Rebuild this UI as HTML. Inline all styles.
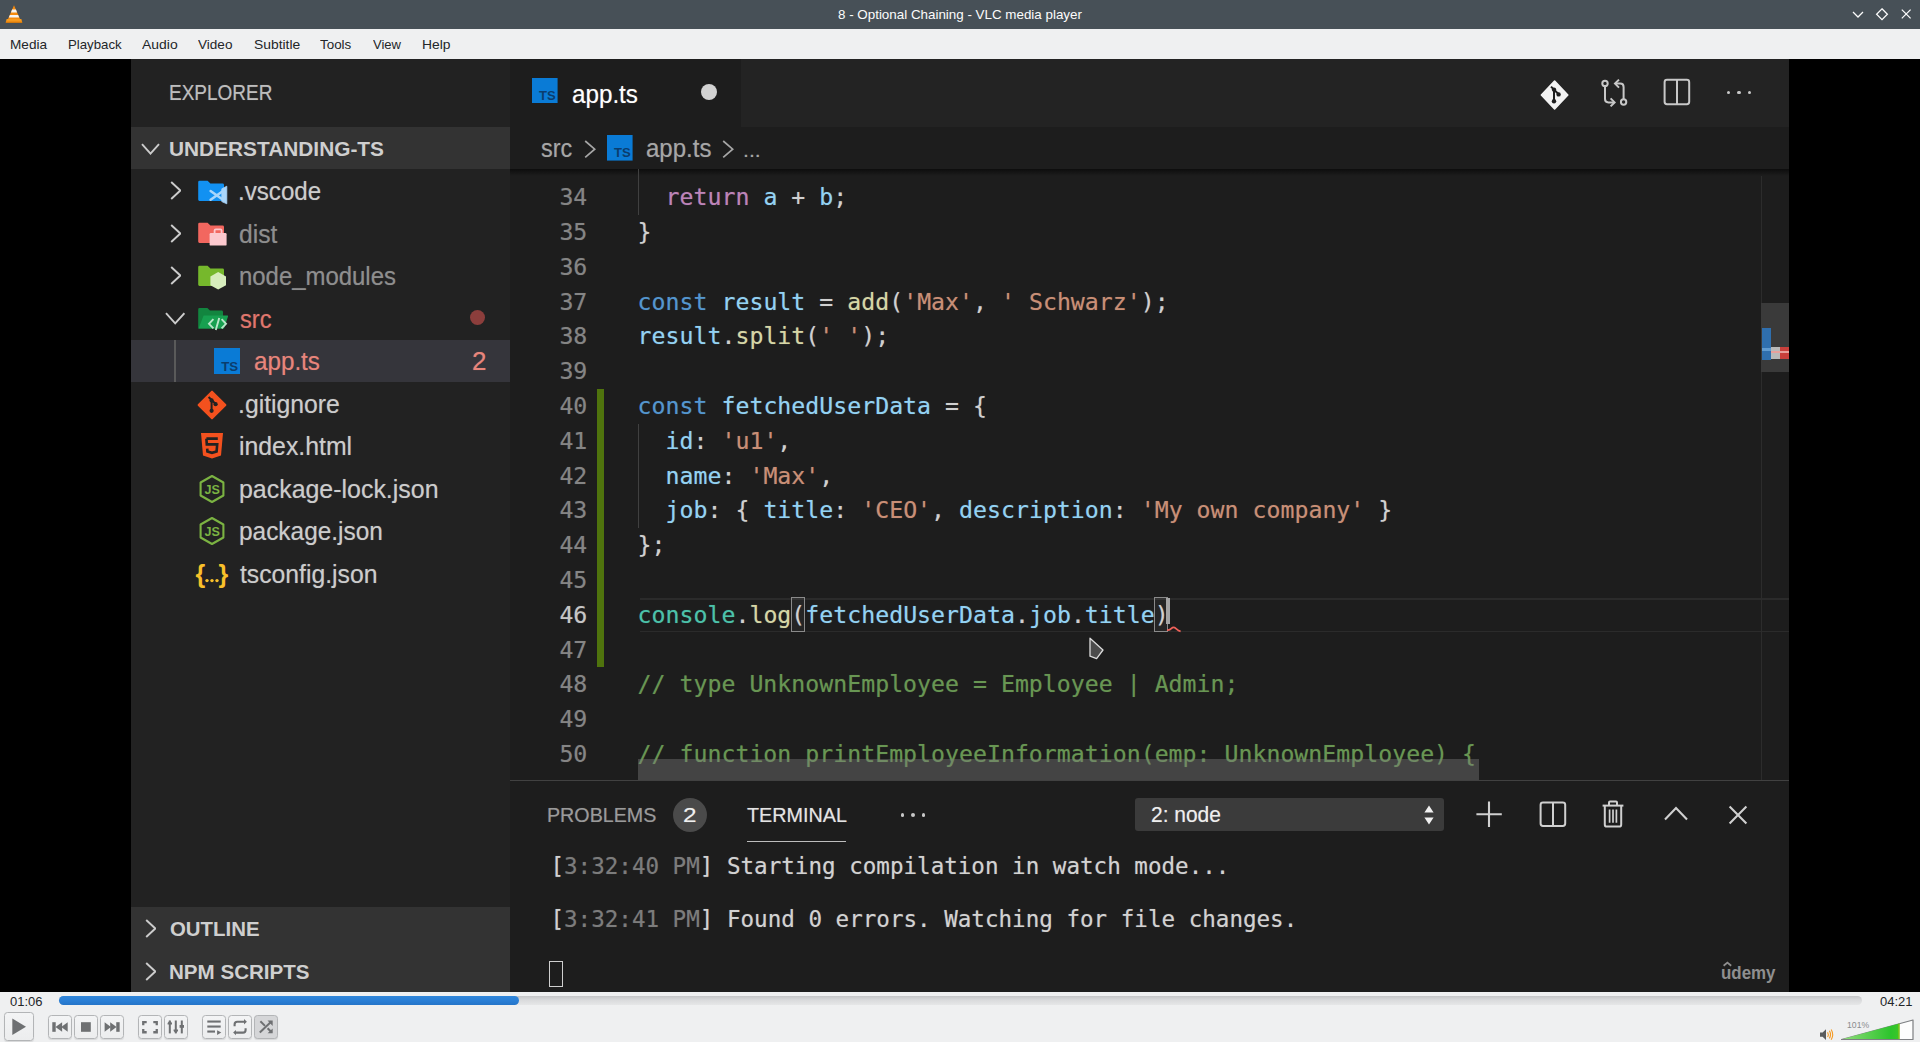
<!DOCTYPE html>
<html><head><meta charset="utf-8"><title>8 - Optional Chaining - VLC media player</title>
<style>
html,body{margin:0;padding:0;background:#000;}
body{width:1920px;height:1042px;position:relative;overflow:hidden;font-family:"Liberation Sans", sans-serif;}
body div,body span,body svg{position:absolute;display:block;white-space:pre;}
span{transform-origin:0 50%;}
.s{font-family:"Liberation Sans", sans-serif;}
.m{font-family:"DejaVu Sans Mono", "Liberation Mono", monospace;}
.s i,.m i{font-style:normal;}
.vid span{text-shadow:0 0 1px color-mix(in srgb, currentColor 45%, transparent);}
</style></head><body>
<div style="left:0px;top:0px;width:1920px;height:29px;background:#475057;"></div>
<svg style="left:5px;top:4px;" width="18" height="20" viewBox="0 0 18 20">
<path d="M9 1.2 L15.2 15.5 L2.8 15.5 Z" fill="#f58a0c"/>
<path d="M7.1 5.6 L10.9 5.6 L12.1 8.6 L5.9 8.6 Z" fill="#f4f4f4"/>
<path d="M4.9 11 L13.1 11 L14.2 13.6 L3.8 13.6 Z" fill="#f4f4f4"/>
<path d="M1.6 15 L16.4 15 L17.2 18.6 L0.8 18.6 Z" fill="#f79a1e"/>
<path d="M0.8 17.6 L17.2 17.6 L17.2 18.8 L0.8 18.8 Z" fill="#e07a05"/>
</svg>
<span id="t1" class="s" style="left:837.50px;top:7.92px;font-size:13.33px;line-height:13.33px;color:#fcfcfc;transform:scaleX(1.0039);">8 - Optional Chaining - VLC media player</span>
<svg style="left:1848px;top:4px;" width="68" height="22" viewBox="0 0 68 22">
<g fill="none" stroke="#fcfcfc" stroke-width="1.25">
<path d="M5 8 L10 13 L15 8"/>
<path d="M34 4.8 L39.4 10.2 L34 15.6 L28.6 10.2 Z"/>
<path d="M53.8 5.6 L62.6 14.4 M62.6 5.6 L53.8 14.4"/>
</g></svg>
<div style="left:0px;top:29px;width:1920px;height:30px;background:#eff0f1;"></div>
<span id="t2" class="s" style="left:9.78px;top:37.62px;font-size:13.33px;line-height:13.33px;color:#232629;transform:scaleX(1.0198);">Media</span>
<span id="t3" class="s" style="left:67.51px;top:37.62px;font-size:13.33px;line-height:13.33px;color:#232629;transform:scaleX(0.9922);">Playback</span>
<span id="t4" class="s" style="left:142.00px;top:37.62px;font-size:13.33px;line-height:13.33px;color:#232629;transform:scaleX(1.0453);">Audio</span>
<span id="t5" class="s" style="left:198.20px;top:37.62px;font-size:13.33px;line-height:13.33px;color:#232629;transform:scaleX(1.0169);">Video</span>
<span id="t6" class="s" style="left:253.50px;top:37.62px;font-size:13.33px;line-height:13.33px;color:#232629;transform:scaleX(1.0399);">Subtitle</span>
<span id="t7" class="s" style="left:320.00px;top:37.62px;font-size:13.33px;line-height:13.33px;color:#232629;transform:scaleX(1.0048);">Tools</span>
<span id="t8" class="s" style="left:372.80px;top:37.62px;font-size:13.33px;line-height:13.33px;color:#232629;transform:scaleX(0.9786);">View</span>
<span id="t9" class="s" style="left:421.96px;top:37.62px;font-size:13.33px;line-height:13.33px;color:#232629;transform:scaleX(1.0385);">Help</span>
<div style="left:0px;top:992px;width:1920px;height:50px;background:#eff0f1;"></div>
<span id="t10" class="s" style="left:10.00px;top:995.56px;font-size:12.8px;line-height:12.8px;color:#232629;transform:scaleX(1.0155);">01:06</span>
<span id="t11" class="s" style="left:1880.00px;top:995.56px;font-size:12.8px;line-height:12.8px;color:#232629;transform:scaleX(1.0155);">04:21</span>
<div style="left:59px;top:996px;width:1803px;height:9px;border-radius:4.5px;background:linear-gradient(#c4c5c7,#d9dadc 45%,#e6e7e8);"></div>
<div style="left:59px;top:996px;width:460px;height:9px;border-radius:4.5px;background:linear-gradient(#3187da,#2a7fd6 50%,#2575c9);"></div>
<div style="left:4.3px;top:1012.2px;width:27.4px;height:27.2px;border:1px solid #b3b5b7;border-radius:3.5px;background:linear-gradient(#f3f4f5,#ecedee);box-shadow:0 1px 1px rgba(0,0,0,0.10);"></div>
<div style="left:48.2px;top:1015.3px;width:21.5px;height:21.4px;border:1px solid #b3b5b7;border-radius:3.5px;background:linear-gradient(#f3f4f5,#ecedee);box-shadow:0 1px 1px rgba(0,0,0,0.10);"></div>
<div style="left:74.2px;top:1015.3px;width:21.5px;height:21.4px;border:1px solid #b3b5b7;border-radius:3.5px;background:linear-gradient(#f3f4f5,#ecedee);box-shadow:0 1px 1px rgba(0,0,0,0.10);"></div>
<div style="left:100.2px;top:1015.3px;width:21.5px;height:21.4px;border:1px solid #b3b5b7;border-radius:3.5px;background:linear-gradient(#f3f4f5,#ecedee);box-shadow:0 1px 1px rgba(0,0,0,0.10);"></div>
<div style="left:138.2px;top:1015.3px;width:21.5px;height:21.4px;border:1px solid #b3b5b7;border-radius:3.5px;background:linear-gradient(#f3f4f5,#ecedee);box-shadow:0 1px 1px rgba(0,0,0,0.10);"></div>
<div style="left:164.2px;top:1015.3px;width:21.5px;height:21.4px;border:1px solid #b3b5b7;border-radius:3.5px;background:linear-gradient(#f3f4f5,#ecedee);box-shadow:0 1px 1px rgba(0,0,0,0.10);"></div>
<div style="left:202.2px;top:1015.3px;width:21.5px;height:21.4px;border:1px solid #b3b5b7;border-radius:3.5px;background:linear-gradient(#f3f4f5,#ecedee);box-shadow:0 1px 1px rgba(0,0,0,0.10);"></div>
<div style="left:228.2px;top:1015.3px;width:21.5px;height:21.4px;border:1px solid #b3b5b7;border-radius:3.5px;background:linear-gradient(#f3f4f5,#ecedee);box-shadow:0 1px 1px rgba(0,0,0,0.10);"></div>
<div style="left:254.2px;top:1015.3px;width:21.5px;height:21.4px;border:1px solid #b3b5b7;border-radius:3.5px;background:#d5d6d8;box-shadow:0 1px 1px rgba(0,0,0,0.10);"></div>
<svg style="left:0px;top:1008px;" width="40" height="34" viewBox="0 0 40 34"><path d="M12.3 10.4 L26 18.75 L12.3 27.1 Z" fill="#6e7072"/></svg>
<svg style="left:48px;top:1015px;" width="24" height="24" viewBox="0 0 24 24"><g fill="#6e7072"><rect x="4.3" y="7.2" width="3.4" height="9.6"/><path d="M14.1 7.2 L14.1 16.8 L7.5 12 Z"/><path d="M19.7 7.2 L19.7 16.8 L13.2 12 Z"/></g></svg>
<svg style="left:74px;top:1015px;" width="24" height="24" viewBox="0 0 24 24"><rect x="7" y="7.2" width="9.8" height="9.6" fill="#6e7072"/></svg>
<svg style="left:100px;top:1015px;" width="24" height="24" viewBox="0 0 24 24"><g fill="#6e7072"><rect x="16.25" y="7.2" width="3.4" height="9.6"/><path d="M4.6 7.2 L4.6 16.8 L11 12 Z"/><path d="M10.2 7.2 L10.2 16.8 L16.5 12 Z"/></g></svg>
<svg style="left:138px;top:1015px;" width="24" height="24" viewBox="0 0 24 24"><g fill="none" stroke="#6e7072" stroke-width="2.3"><path d="M5.25 10.2 V7.05 H8.7"/><path d="M15.3 7.05 H18.75 V10.2"/><path d="M5.25 14.1 V17.25 H8.7"/><path d="M15.3 17.25 H18.75 V14.1"/></g></svg>
<svg style="left:164px;top:1015px;" width="24" height="24" viewBox="0 0 24 24"><g fill="#6e7072"><rect x="4.8" y="5.5" width="2" height="12.9"/><rect x="10.8" y="5.5" width="2" height="12.9"/><rect x="16.8" y="5.5" width="2" height="12.9"/><path d="M5.8 5.6 L8 8 V9.6 H3.6 V8 Z"/><path d="M11.8 18.2 L9.6 16 V14.6 H14 V16 Z"/><path d="M15.6 10 H20 V12.8 H15.6 Z"/></g></svg>
<svg style="left:202px;top:1015px;" width="24" height="24" viewBox="0 0 24 24"><g fill="#6e7072"><rect x="5.3" y="5.5" width="13.4" height="2.1"/><rect x="5.3" y="10.5" width="13.4" height="2.1"/><rect x="5.3" y="15.5" width="7.7" height="2.1"/><path d="M15.1 15.3 L19.3 17.6 L15.1 19.9 Z"/></g></svg>
<svg style="left:228px;top:1015px;" width="24" height="24" viewBox="0 0 24 24"><g fill="none" stroke="#6e7072" stroke-width="2.1"><path d="M6.6 11.2 V9.4 Q6.6 6.8 9.2 6.8 H16.4"/><path d="M17.6 13.2 V15 Q17.6 17.6 15 17.6 H7.6"/></g><g fill="#6e7072"><path d="M16 4.1 L18.9 6.8 L16 9.5 Z"/><path d="M8 14.9 L5.1 17.6 L8 20.3 Z"/></g></svg>
<svg style="left:254px;top:1015px;" width="24" height="24" viewBox="0 0 24 24"><g fill="none" stroke="#6e7072" stroke-width="2"><path d="M5.8 17.6 L17.4 6.6"/><path d="M6.4 6.3 L11 10.9"/><path d="M13.6 13.2 L17.6 17.2"/></g><g fill="#6e7072"><path d="M13.5 5.5 H18.7 V10.9 Z"/><path d="M18.7 13.4 V18.3 H13.6 Z"/></g></svg>
<svg style="left:1819px;top:1027px;" width="16" height="15" viewBox="0 0 16 15"><path d="M1 5.4 H3.6 L7 2.2 V13 L3.6 9.8 H1 Z" fill="#5a5c5e"/>
<g fill="none" stroke="#f59a23" stroke-width="1.1"><path d="M8.6 5.2 Q10 7.6 8.6 10"/><path d="M10.4 3.8 Q12.6 7.6 10.4 11.4"/><path d="M12.2 2.4 Q15.2 7.6 12.2 12.8"/></g></svg>
<svg style="left:1840px;top:1018px;" width="76" height="24" viewBox="0 0 76 24"><defs><linearGradient id="vg" x1="0" x2="1" y1="0" y2="0"><stop offset="0" stop-color="#8fdc7a"/><stop offset="0.85" stop-color="#2cc42c"/><stop offset="1" stop-color="#3cc628"/></linearGradient></defs>
<path d="M1.5 21.5 L73 2 L73 21.5 Z" fill="#fdfdfd" stroke="#7d7f82" stroke-width="1.2" stroke-linejoin="round"/>
<path d="M2.6 21 L59.4 5.6 L59.4 21 Z" fill="url(#vg)"/>
<rect x="58.2" y="5.8" width="1.4" height="15.2" fill="#7fc51a"/></svg>
<span id="t12" class="s" style="left:1846.50px;top:1020.72px;font-size:8.6px;line-height:8.6px;color:#8a8c8e;transform:scaleX(1.0072);">101%</span>
<div style="left:131px;top:59px;width:1658px;height:933px;overflow:hidden;background:#1d1d1d"><div style="left:-131px;top:-59px;width:1920px;height:1042px;" class="vid">
<div style="left:131px;top:59px;width:1658px;height:933px;background:#1d1d1d;"></div>
<div style="left:131px;top:59px;width:379px;height:933px;background:#222222;"></div>
<span id="t13" class="s" style="left:169.12px;top:82.80px;font-size:21.5px;line-height:21.5px;color:#bdbdbd;transform:scaleX(0.8826);">EXPLORER</span>
<div style="left:131px;top:127px;width:379px;height:42px;background:#333333;"></div>
<span id="t14" class="s" style="left:169.01px;top:138.22px;font-size:21px;line-height:21px;color:#cfcfcf;font-weight:700;text-shadow:none;transform:scaleX(0.9926);">UNDERSTANDING-TS</span>
<svg style="left:140.5px;top:143px;" width="19" height="12" viewBox="0 0 19 12"><path d="M1 1.2 L9.5 10.6 L18 1.2" fill="none" stroke="#cccccc" stroke-width="1.9"/></svg>
<div style="left:131px;top:339.6px;width:379px;height:42.55px;background:#35353b;"></div>
<div style="left:174.3px;top:339.6px;width:1.6px;height:42.55px;background:#5a5a5a;"></div>
<span id="t15" class="s" style="left:238.07px;top:179.04px;font-size:25px;line-height:25px;color:#cccccc;transform:scaleX(0.9657);">.vscode</span>
<svg style="left:169.6px;top:181.3px;" width="11.6" height="19" viewBox="0 0 11.6 19"><path d="M1.2 1 L10.299999999999999 9.5 L1.2 18" fill="none" stroke="#cccccc" stroke-width="1.9"/></svg>
<span id="t16" class="s" style="left:239.01px;top:221.59px;font-size:25px;line-height:25px;color:#8e8e8e;transform:scaleX(0.9853);">dist</span>
<svg style="left:169.6px;top:223.85px;" width="11.6" height="19" viewBox="0 0 11.6 19"><path d="M1.2 1 L10.299999999999999 9.5 L1.2 18" fill="none" stroke="#cccccc" stroke-width="1.9"/></svg>
<span id="t17" class="s" style="left:239.04px;top:264.14px;font-size:25px;line-height:25px;color:#8e8e8e;transform:scaleX(0.9568);">node_modules</span>
<svg style="left:169.6px;top:266.4px;" width="11.6" height="19" viewBox="0 0 11.6 19"><path d="M1.2 1 L10.299999999999999 9.5 L1.2 18" fill="none" stroke="#cccccc" stroke-width="1.9"/></svg>
<span id="t18" class="s" style="left:240.00px;top:306.69px;font-size:25px;line-height:25px;color:#e0766c;transform:scaleX(0.9474);">src</span>
<svg style="left:164.8px;top:312.05px;" width="20.4" height="12.8" viewBox="0 0 20.4 12.8"><path d="M1 1.2 L10.2 11.4 L19.4 1.2" fill="none" stroke="#cccccc" stroke-width="1.9"/></svg>
<span id="t19" class="s" style="left:253.73px;top:349.24px;font-size:25px;line-height:25px;color:#e8857b;transform:scaleX(0.9684);">app.ts</span>
<span id="t20" class="s" style="left:238.02px;top:391.79px;font-size:25px;line-height:25px;color:#cccccc;transform:scaleX(0.9906);">.gitignore</span>
<span id="t21" class="s" style="left:239.01px;top:434.34px;font-size:25px;line-height:25px;color:#cccccc;transform:scaleX(0.9929);">index.html</span>
<span id="t22" class="s" style="left:239.00px;top:476.89px;font-size:25px;line-height:25px;color:#cccccc;transform:scaleX(0.9969);">package-lock.json</span>
<span id="t23" class="s" style="left:239.02px;top:519.44px;font-size:25px;line-height:25px;color:#cccccc;transform:scaleX(0.9765);">package.json</span>
<span id="t24" class="s" style="left:240.00px;top:561.99px;font-size:25px;line-height:25px;color:#cccccc;transform:scaleX(0.9894);">tsconfig.json</span>
<svg style="left:198px;top:179.9px;" width="30" height="25" viewBox="0 0 30 25"><path d="M1.5 0.8 H9.6 L12.4 3.6 H24.6 Q26 3.6 26 5 V19.6 Q26 21 24.6 21 H1.5 Q0.2 21 0.2 19.6 V2.2 Q0.2 0.8 1.5 0.8 Z" fill="#1291f2"/><path d="M12.6 11 L25 19.8 M12.6 19.8 L25 11" fill="none" stroke="#a9d6fb" stroke-width="2.5" stroke-linecap="round"/><path d="M23.8 8.8 L28.8 6.2 V23.8 L23.8 21.6 Z" fill="#a9d6fb" stroke="#a9d6fb" stroke-width="0.8" stroke-linejoin="round"/></svg>
<svg style="left:198px;top:222.45px;" width="30" height="25" viewBox="0 0 30 25"><path d="M1.5 0.8 H9.6 L12.4 3.6 H24.6 Q26 3.6 26 5 V19.6 Q26 21 24.6 21 H1.5 Q0.2 21 0.2 19.6 V2.2 Q0.2 0.8 1.5 0.8 Z" fill="#f2675f"/><rect x="11.6" y="11" width="17" height="12.6" rx="1.2" fill="#fcc9ce"/><path d="M16.6 11 V8.6 Q16.6 7.4 17.8 7.4 H22.4 Q23.6 7.4 23.6 8.6 V11" fill="none" stroke="#fcc9ce" stroke-width="1.8"/></svg>
<svg style="left:198px;top:265.0px;" width="30" height="25" viewBox="0 0 30 25"><path d="M1.5 0.8 H9.6 L12.4 3.6 H24.6 Q26 3.6 26 5 V19.6 Q26 21 24.6 21 H1.5 Q0.2 21 0.2 19.6 V2.2 Q0.2 0.8 1.5 0.8 Z" fill="#76b82c"/><path d="M20.2 7 L28 11.4 V20.2 L20.2 24.6 L12.4 20.2 V11.4 Z" fill="#d7edbd"/></svg>
<svg style="left:198px;top:306.55px;" width="31" height="26" viewBox="0 0 31 26"><path d="M1.5 1 H9.4 L12 3.6 H23.6 Q25 3.6 25 5 V21.4 H0.2 V2.4 Q0.2 1 1.5 1 Z" fill="#12853f"/><path d="M5.6 8.4 H29.4 Q30.4 8.4 30 9.4 L26 21.4 H0.6 Z" fill="#17a050"/><path d="M15.4 12.2 L11 16.8 L15.4 21.4 M23.6 12.2 L28 16.8 L23.6 21.4 M21.2 11 L17.8 23" fill="none" stroke="#b9e6c9" stroke-width="1.9"/></svg>
<svg style="left:214.4px;top:347.8px;" width="26" height="26" viewBox="0 0 26 26"><rect width="26" height="26" fill="#0a7bd6"/><text x="7.2" y="22.6" font-family="Liberation Sans, sans-serif" font-weight="700" font-size="13.5" fill="#0b3d6e" textLength="17" lengthAdjust="spacingAndGlyphs">TS</text></svg>
<div style="left:469.6px;top:310.4px;width:15px;height:15px;border-radius:8px;background:#8c3e3c;"></div>
<span id="t25" class="s" style="left:472.46px;top:349.24px;font-size:25px;line-height:25px;color:#e8857b;transform:scaleX(1.0417);">2</span>
<svg style="left:197px;top:389.65px;" width="30" height="30" viewBox="0 0 30 30"><path d="M15 1.6 L28.4 15 L15 28.4 L1.6 15 Z" fill="#f4511e" stroke="#f4511e" stroke-width="2" stroke-linejoin="round"/><path d="M11.6 7 L18.4 13.8 M14.6 10.4 V20.6" stroke="#222" stroke-width="2" fill="none"/><circle cx="14.6" cy="10.4" r="2.1" fill="#222"/><circle cx="14.6" cy="20.8" r="2.1" fill="#222"/><circle cx="18.6" cy="14.2" r="2.1" fill="#222"/></svg>
<svg style="left:199px;top:431.2px;" width="26" height="30" viewBox="0 0 26 30"><path d="M2 2 H24 L22 24.6 L13 27.6 L4 24.6 Z" fill="#f4511e"/><path d="M7.4 7.6 H18.8 M7.4 7.6 L7.8 13.4 H18.2 L17.6 20.4 L13 21.8 L8.4 20.4 L8.2 17.6" fill="none" stroke="#222" stroke-width="2.6"/></svg>
<svg style="left:198px;top:473.75px;" width="28" height="30" viewBox="0 0 28 30"><path d="M14 2 L25.4 8.5 V21.5 L14 28 L2.6 21.5 V8.5 Z" fill="none" stroke="#7bb342" stroke-width="2.1" stroke-linejoin="round"/><text x="6.6" y="20.2" font-family="Liberation Sans, sans-serif" font-weight="700" font-size="13.4" fill="#7bb342" textLength="15.4" lengthAdjust="spacingAndGlyphs">JS</text></svg>
<svg style="left:198px;top:516.3px;" width="28" height="30" viewBox="0 0 28 30"><path d="M14 2 L25.4 8.5 V21.5 L14 28 L2.6 21.5 V8.5 Z" fill="none" stroke="#7bb342" stroke-width="2.1" stroke-linejoin="round"/><text x="6.6" y="20.2" font-family="Liberation Sans, sans-serif" font-weight="700" font-size="13.4" fill="#7bb342" textLength="15.4" lengthAdjust="spacingAndGlyphs">JS</text></svg>
<svg style="left:195px;top:560.35px;" width="34" height="30" viewBox="0 0 34 30"><text x="0.4" y="23.4" font-family="Liberation Sans, sans-serif" font-weight="700" font-size="25" fill="#f9c02a">{</text><text x="23.4" y="23.4" font-family="Liberation Sans, sans-serif" font-weight="700" font-size="25" fill="#f9c02a">}</text><circle cx="12" cy="20.6" r="1.7" fill="#f9c02a"/><circle cx="17" cy="20.6" r="1.7" fill="#f9c02a"/><circle cx="22" cy="20.6" r="1.7" fill="#f9c02a"/></svg>
<div style="left:131px;top:906.5px;width:379px;height:85.5px;background:#333333;"></div>
<svg style="left:144.6px;top:919px;" width="11.6" height="19" viewBox="0 0 11.6 19"><path d="M1.2 1 L10.299999999999999 9.5 L1.2 18" fill="none" stroke="#cccccc" stroke-width="1.9"/></svg>
<svg style="left:144.6px;top:961.6px;" width="11.6" height="19" viewBox="0 0 11.6 19"><path d="M1.2 1 L10.299999999999999 9.5 L1.2 18" fill="none" stroke="#cccccc" stroke-width="1.9"/></svg>
<span id="t26" class="s" style="left:170.00px;top:918.22px;font-size:21px;line-height:21px;color:#cfcfcf;font-weight:700;text-shadow:none;transform:scaleX(0.9712);">OUTLINE</span>
<span id="t27" class="s" style="left:169.02px;top:960.72px;font-size:21px;line-height:21px;color:#cfcfcf;font-weight:700;text-shadow:none;transform:scaleX(0.9796);">NPM SCRIPTS</span>
<div style="left:510px;top:59px;width:1279px;height:68px;background:#232323;"></div>
<div style="left:510px;top:59px;width:231px;height:68px;background:#1d1d1d;"></div>
<svg style="left:532px;top:77.8px;" width="25.6" height="25.6" viewBox="0 0 26 26"><rect width="26" height="26" fill="#0a7bd6"/><text x="7.2" y="22.6" font-family="Liberation Sans, sans-serif" font-weight="700" font-size="13.5" fill="#0b3d6e" textLength="17" lengthAdjust="spacingAndGlyphs">TS</text></svg>
<span id="t28" class="s" style="left:571.53px;top:82.34px;font-size:25px;line-height:25px;color:#ffffff;transform:scaleX(0.9684);">app.ts</span>
<div style="left:701px;top:84px;width:16px;height:16px;border-radius:8px;background:#d2d2d2;"></div>
<span id="t29" class="s" style="left:541.30px;top:136.14px;font-size:25px;line-height:25px;color:#a6a6a6;transform:scaleX(0.9353);">src</span>
<svg style="left:584px;top:140.2px;" width="12" height="18.4" viewBox="0 0 12 18.4"><path d="M1.2 1 L10.7 9.2 L1.2 17.4" fill="none" stroke="#a6a6a6" stroke-width="1.7"/></svg>
<svg style="left:607px;top:135.2px;" width="25.6" height="25.6" viewBox="0 0 26 26"><rect width="26" height="26" fill="#0a7bd6"/><text x="7.2" y="22.6" font-family="Liberation Sans, sans-serif" font-weight="700" font-size="13.5" fill="#0b3d6e" textLength="17" lengthAdjust="spacingAndGlyphs">TS</text></svg>
<span id="t30" class="s" style="left:646.04px;top:136.14px;font-size:25px;line-height:25px;color:#a6a6a6;transform:scaleX(0.9609);">app.ts</span>
<svg style="left:721.6px;top:140.2px;" width="12" height="18.4" viewBox="0 0 12 18.4"><path d="M1.2 1 L10.7 9.2 L1.2 17.4" fill="none" stroke="#a6a6a6" stroke-width="1.7"/></svg>
<span id="t31" class="s" style="left:742.74px;top:140.37px;font-size:20px;line-height:20px;color:#a6a6a6;transform:scaleX(1.0628);">...</span>
<div style="left:510px;top:169px;width:1279px;height:7px;background:linear-gradient(rgba(0,0,0,0.55),rgba(0,0,0,0));"></div>
<svg style="left:1539px;top:78px;" width="32" height="34" viewBox="0 0 32 34"><path d="M15.6 3 L28.8 17 L15.6 31 L2.4 17 Z" fill="#f2f2f2" stroke="#f2f2f2" stroke-width="1.6" stroke-linejoin="round"/><path d="M12 8.6 L19.4 16 M15 11.6 V23" stroke="#1d1d1d" stroke-width="2" fill="none"/><circle cx="15" cy="11.6" r="2.2" fill="#1d1d1d"/><circle cx="15" cy="23.2" r="2.2" fill="#1d1d1d"/><circle cx="19.6" cy="16.4" r="2.2" fill="#1d1d1d"/></svg>
<svg style="left:1599px;top:77px;" width="32" height="32" viewBox="0 0 32 32"><g fill="none" stroke="#c8c8c8" stroke-width="2"><circle cx="6" cy="6.4" r="2.7"/><circle cx="24.6" cy="25" r="2.7"/><path d="M6 9.2 V22 Q6 25.4 9.4 25.4 H15"/><path d="M11.6 21.4 L15.6 25.4 L11.6 29.4"/><path d="M24.6 22.2 V10 Q24.6 6.6 21.2 6.6 H16.4"/><path d="M20 2.6 L16 6.6 L20 10.6"/></g></svg>
<svg style="left:1663px;top:78px;" width="28" height="28" viewBox="0 0 28 28"><g fill="none" stroke="#c8c8c8" stroke-width="2"><rect x="1.6" y="1.8" width="24.6" height="24.4" rx="2.4"/><path d="M14 1.8 V26.2"/></g></svg>
<div style="left:1726.5px;top:90.6px;width:3.6px;height:3.6px;border-radius:2px;background:#c8c8c8;"></div>
<div style="left:1737.1px;top:90.6px;width:3.6px;height:3.6px;border-radius:2px;background:#c8c8c8;"></div>
<div style="left:1747.7px;top:90.6px;width:3.6px;height:3.6px;border-radius:2px;background:#c8c8c8;"></div>
<div style="left:640px;top:598.2px;width:1149px;height:1.4px;background:#2b2b2b;"></div>
<div style="left:640px;top:630.6px;width:1149px;height:1.4px;background:#2b2b2b;"></div>
<div style="left:597.4px;top:388.5px;width:6.4px;height:278.2px;background:#4f730d;"></div>
<div style="left:638.2px;top:169px;width:1.2px;height:46px;background:#404040;"></div>
<div style="left:638.2px;top:424px;width:1.2px;height:104px;background:#404040;"></div>
<span id="t32" class="m" style="left:559.4px;top:185.27px;font-size:23.2px;line-height:23.2px;color:#858585;letter-spacing:0.014px;">34</span>
<span id="t33" class="m" style="left:637.6px;top:185.27px;font-size:23.2px;line-height:23.2px;color:#d0d0d0;letter-spacing:0.014px;">  <i style="color:#bd84b9">return</i> <i style="color:#93d2f3">a</i> + <i style="color:#93d2f3">b</i>;</span>
<span id="t34" class="m" style="left:559.4px;top:220.07px;font-size:23.2px;line-height:23.2px;color:#858585;letter-spacing:0.014px;">35</span>
<span id="t35" class="m" style="left:637.6px;top:220.07px;font-size:23.2px;line-height:23.2px;color:#d0d0d0;letter-spacing:0.014px;">}</span>
<span id="t36" class="m" style="left:559.4px;top:254.87px;font-size:23.2px;line-height:23.2px;color:#858585;letter-spacing:0.014px;">36</span>
<span id="t37" class="m" style="left:559.4px;top:289.67px;font-size:23.2px;line-height:23.2px;color:#858585;letter-spacing:0.014px;">37</span>
<span id="t38" class="m" style="left:637.6px;top:289.67px;font-size:23.2px;line-height:23.2px;color:#d0d0d0;letter-spacing:0.014px;"><i style="color:#5496cf">const</i> <i style="color:#93d2f3">result</i> = <i style="color:#d6d6a6">add</i>(<i style="color:#c98f76">'Max'</i>, <i style="color:#c98f76">' Schwarz'</i>);</span>
<span id="t39" class="m" style="left:559.4px;top:324.47px;font-size:23.2px;line-height:23.2px;color:#858585;letter-spacing:0.014px;">38</span>
<span id="t40" class="m" style="left:637.6px;top:324.47px;font-size:23.2px;line-height:23.2px;color:#d0d0d0;letter-spacing:0.014px;"><i style="color:#93d2f3">result</i>.<i style="color:#d6d6a6">split</i>(<i style="color:#c98f76">' '</i>);</span>
<span id="t41" class="m" style="left:559.4px;top:359.27px;font-size:23.2px;line-height:23.2px;color:#858585;letter-spacing:0.014px;">39</span>
<span id="t42" class="m" style="left:559.4px;top:394.07px;font-size:23.2px;line-height:23.2px;color:#858585;letter-spacing:0.014px;">40</span>
<span id="t43" class="m" style="left:637.6px;top:394.07px;font-size:23.2px;line-height:23.2px;color:#d0d0d0;letter-spacing:0.014px;"><i style="color:#5496cf">const</i> <i style="color:#93d2f3">fetchedUserData</i> = {</span>
<span id="t44" class="m" style="left:559.4px;top:428.87px;font-size:23.2px;line-height:23.2px;color:#858585;letter-spacing:0.014px;">41</span>
<span id="t45" class="m" style="left:637.6px;top:428.87px;font-size:23.2px;line-height:23.2px;color:#d0d0d0;letter-spacing:0.014px;">  <i style="color:#93d2f3">id</i>: <i style="color:#c98f76">'u1'</i>,</span>
<span id="t46" class="m" style="left:559.4px;top:463.67px;font-size:23.2px;line-height:23.2px;color:#858585;letter-spacing:0.014px;">42</span>
<span id="t47" class="m" style="left:637.6px;top:463.67px;font-size:23.2px;line-height:23.2px;color:#d0d0d0;letter-spacing:0.014px;">  <i style="color:#93d2f3">name</i>: <i style="color:#c98f76">'Max'</i>,</span>
<span id="t48" class="m" style="left:559.4px;top:498.47px;font-size:23.2px;line-height:23.2px;color:#858585;letter-spacing:0.014px;">43</span>
<span id="t49" class="m" style="left:637.6px;top:498.47px;font-size:23.2px;line-height:23.2px;color:#d0d0d0;letter-spacing:0.014px;">  <i style="color:#93d2f3">job</i>: { <i style="color:#93d2f3">title</i>: <i style="color:#c98f76">'CEO'</i>, <i style="color:#93d2f3">description</i>: <i style="color:#c98f76">'My own company'</i> }</span>
<span id="t50" class="m" style="left:559.4px;top:533.27px;font-size:23.2px;line-height:23.2px;color:#858585;letter-spacing:0.014px;">44</span>
<span id="t51" class="m" style="left:637.6px;top:533.27px;font-size:23.2px;line-height:23.2px;color:#d0d0d0;letter-spacing:0.014px;">};</span>
<span id="t52" class="m" style="left:559.4px;top:568.07px;font-size:23.2px;line-height:23.2px;color:#858585;letter-spacing:0.014px;">45</span>
<span id="t53" class="m" style="left:559.4px;top:602.87px;font-size:23.2px;line-height:23.2px;color:#c6c6c6;letter-spacing:0.014px;">46</span>
<span id="t54" class="m" style="left:637.6px;top:602.87px;font-size:23.2px;line-height:23.2px;color:#d0d0d0;letter-spacing:0.014px;"><i style="color:#4cc2aa">console</i>.<i style="color:#d6d6a6">log</i>(<i style="color:#93d2f3">fetchedUserData</i>.<i style="color:#93d2f3">job</i>.<i style="color:#93d2f3">title</i>)</span>
<span id="t55" class="m" style="left:559.4px;top:637.67px;font-size:23.2px;line-height:23.2px;color:#858585;letter-spacing:0.014px;">47</span>
<span id="t56" class="m" style="left:559.4px;top:672.47px;font-size:23.2px;line-height:23.2px;color:#858585;letter-spacing:0.014px;">48</span>
<span id="t57" class="m" style="left:637.6px;top:672.47px;font-size:23.2px;line-height:23.2px;color:#d0d0d0;letter-spacing:0.014px;"><i style="color:#689653">// type UnknownEmployee = Employee | Admin;</i></span>
<span id="t58" class="m" style="left:559.4px;top:707.27px;font-size:23.2px;line-height:23.2px;color:#858585;letter-spacing:0.014px;">49</span>
<span id="t59" class="m" style="left:559.4px;top:742.07px;font-size:23.2px;line-height:23.2px;color:#858585;letter-spacing:0.014px;">50</span>
<span id="t60" class="m" style="left:637.6px;top:742.07px;font-size:23.2px;line-height:23.2px;color:#d0d0d0;letter-spacing:0.014px;"><i style="color:#689653">// function printEmployeeInformation(emp: UnknownEmployee) {</i></span>
<div style="left:790.98px;top:597.4px;width:14px;height:34.4px;border:1.2px solid #8a8a8a;box-sizing:border-box;background:rgba(255,255,255,0.04)"></div>
<div style="left:1154.46px;top:597.4px;width:14px;height:34.4px;border:1.2px solid #8a8a8a;box-sizing:border-box;background:rgba(255,255,255,0.04)"></div>
<div style="left:1166px;top:597.6px;width:4.4px;height:26.4px;background:#a4a4a4;"></div>
<svg style="left:1166px;top:624.4px;" width="18" height="10" viewBox="0 0 18 10"><path d="M1 6 Q3.5 6.5 5.5 4.4 T10 4.6 T14.6 7.4" fill="none" stroke="#f0625a" stroke-width="1.7"/></svg>
<svg style="left:1086px;top:634px;" width="22" height="28" viewBox="0 0 22 28"><path d="M4 4.2 V22.2 L10.6 24.6 L17 16 Z" fill="#4c4c4c" stroke="#dcdcdc" stroke-width="1.3" stroke-linejoin="round"/></svg>
<div style="left:1760.6px;top:176px;width:1px;height:604px;background:#2c2c2c;"></div>
<div style="left:1761px;top:302.8px;width:28px;height:69.5px;background:#3a3a3a;"></div>
<div style="left:1761.6px;top:328px;width:9px;height:32px;background:#2f6fae;"></div>
<div style="left:1761.6px;top:347.6px;width:9px;height:3px;background:#5f9bd1;"></div>
<div style="left:1770.6px;top:347px;width:9px;height:11.6px;background:#b9b9b9;"></div>
<div style="left:1779.6px;top:347px;width:9.4px;height:11.6px;background:#c9403c;"></div>
<div style="left:1770.6px;top:350.6px;width:18.4px;height:2px;background:#e8a09c;"></div>
<div style="left:638px;top:759.4px;width:841px;height:20.6px;background:rgba(125,125,125,0.42);"></div>
<div style="left:510px;top:780px;width:1279px;height:1.3px;background:#414141;"></div>
<span id="t61" class="s" style="left:547.36px;top:804.22px;font-size:21px;line-height:21px;color:#9a9a9a;transform:scaleX(0.9370);">PROBLEMS</span>
<div style="left:673px;top:798px;width:34px;height:34px;border-radius:17px;background:#4a4a4a;"></div>
<span id="t62" class="s" style="left:682.84px;top:804.22px;font-size:21px;line-height:21px;color:#f0f0f0;transform:scaleX(1.1600);">2</span>
<span id="t63" class="s" style="left:746.70px;top:804.22px;font-size:21px;line-height:21px;color:#e4e4e4;transform:scaleX(0.9412);">TERMINAL</span>
<div style="left:746.7px;top:840.6px;width:99.3px;height:1.3px;background:#bdbdbd;"></div>
<div style="left:901.0px;top:813.2px;width:3.4px;height:3.4px;border-radius:2px;background:#c8c8c8;"></div>
<div style="left:911.4px;top:813.2px;width:3.4px;height:3.4px;border-radius:2px;background:#c8c8c8;"></div>
<div style="left:921.8px;top:813.2px;width:3.4px;height:3.4px;border-radius:2px;background:#c8c8c8;"></div>
<div style="left:1135px;top:797.6px;width:309px;height:33.6px;border-radius:3px;background:#3b3b3b;"></div>
<span id="t64" class="s" style="left:1151.03px;top:804.80px;font-size:21.5px;line-height:21.5px;color:#eeeeee;transform:scaleX(0.9745);">2: node</span>
<svg style="left:1422px;top:803px;" width="14" height="24" viewBox="0 0 14 24"><path d="M7 2.4 L11.6 9.6 H2.4 Z M7 21.6 L11.6 14.4 H2.4 Z" fill="#f0f0f0"/></svg>
<svg style="left:1475px;top:800px;" width="28" height="28" viewBox="0 0 28 28"><path d="M14 1.6 V27 M1.4 14.2 H26.8" stroke="#d0d0d0" stroke-width="2.1" fill="none"/></svg>
<svg style="left:1539px;top:801px;" width="28" height="28" viewBox="0 0 28 28"><g fill="none" stroke="#d0d0d0" stroke-width="2"><rect x="1.6" y="1.4" width="24.6" height="23.6" rx="2.4"/><path d="M14 1.4 V25"/></g></svg>
<svg style="left:1601px;top:799px;" width="24" height="30" viewBox="0 0 24 30"><g fill="none" stroke="#d0d0d0" stroke-width="2"><path d="M1.6 6.6 H22.4"/><path d="M8 6.4 V3.4 Q8 2.4 9 2.4 H15 Q16 2.4 16 3.4 V6.4"/><path d="M3.8 6.8 V25.4 Q3.8 27.6 6 27.6 H18 Q20.2 27.6 20.2 25.4 V6.8"/><path d="M8.6 10.6 V23.8 M12 10.6 V23.8 M15.4 10.6 V23.8" stroke-width="1.7"/></g></svg>
<svg style="left:1663px;top:804px;" width="26" height="18" viewBox="0 0 26 18"><path d="M2 15.4 L13 4 L24 15.4" fill="none" stroke="#d0d0d0" stroke-width="2.1"/></svg>
<svg style="left:1727px;top:804px;" width="22" height="22" viewBox="0 0 22 22"><path d="M2.6 2.6 L19.4 19.4 M19.4 2.6 L2.6 19.4" fill="none" stroke="#d0d0d0" stroke-width="2.1"/></svg>
<span id="t65" class="m" style="left:550.4px;top:854.92px;font-size:22.55px;line-height:22.55px;color:#d2d2d2;letter-spacing:0.005px;">[<i style="color:#7c7c7c">3:32:40 PM</i>] Starting compilation in watch mode...</span>
<span id="t66" class="m" style="left:550.4px;top:908.32px;font-size:22.55px;line-height:22.55px;color:#d2d2d2;letter-spacing:0.005px;">[<i style="color:#7c7c7c">3:32:41 PM</i>] Found 0 errors. Watching for file changes.</span>
<div style="left:548.6px;top:961px;width:14px;height:26px;border:1.6px solid #cfcfcf;box-sizing:border-box;"></div>
<span id="t67" class="s" style="left:1721.47px;top:963.59px;font-size:18.2px;line-height:18.2px;color:#8f8f8f;font-weight:700;text-shadow:none;transform:scaleX(0.9298);">udemy</span>
<svg style="left:1722.4px;top:961.4px;" width="12" height="6" viewBox="0 0 12 6"><path d="M1.6 4.8 L5.4 1.6 L9.2 4.8" fill="none" stroke="#8f8f8f" stroke-width="1.8"/></svg>
</div></div>
</body></html>
